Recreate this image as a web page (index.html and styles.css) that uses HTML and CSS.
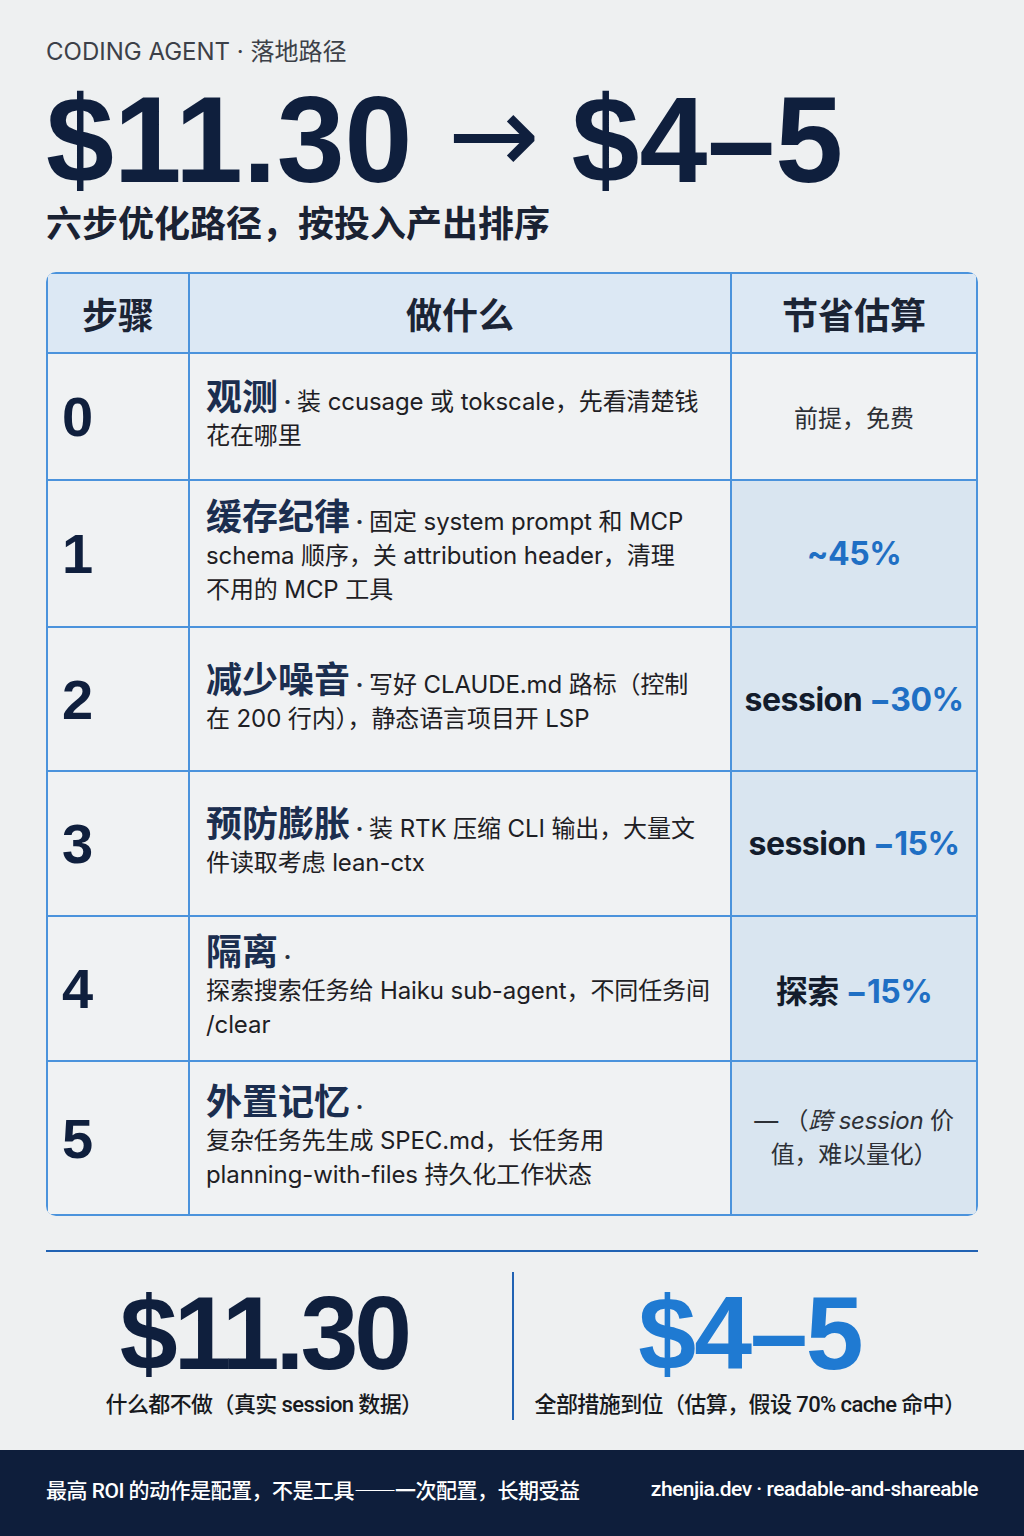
FILE: index.html
```html
<!DOCTYPE html>
<html lang="zh-CN">
<head>
<meta charset="utf-8">
<title>Coding Agent 落地路径</title>
<link rel="stylesheet" href="styles.css">
</head>
<body>
<div class="page">
  <header class="hero">
    <div class="eyebrow">CODING AGENT · 落地路径</div>
    <h1 class="headline"><span class="num a">$11.30</span><span class="arrow">→</span><span class="num b">$4–5</span></h1>
    <div class="subtitle">六步优化路径，按投入产出排序</div>
  </header>

  <div class="table">
    <div class="cell head">步骤</div>
    <div class="cell head">做什么</div>
    <div class="cell head">节省估算</div>

    <div class="cell step">0</div>
    <div class="cell what"><p><span class="t">观测</span><b class="dot"> · </b>装 ccusage 或 tokscale，先看清楚钱<br>花在哪里</p></div>
    <div class="cell save plain"><p>前提，免费</p></div>

    <div class="cell step">1</div>
    <div class="cell what"><p><span class="t">缓存纪律</span><b class="dot"> · </b>固定 system prompt 和 MCP<br>schema 顺序，关 attribution header，清理<br>不用的 MCP 工具</p></div>
    <div class="cell save tint"><p><span class="blue">~45%</span></p></div>

    <div class="cell step">2</div>
    <div class="cell what"><p><span class="t">减少噪音</span><b class="dot"> · </b>写好 CLAUDE.md 路标（控制<br>在 200 行内），静态语言项目开 LSP</p></div>
    <div class="cell save tint"><p>session <span class="blue">−30%</span></p></div>

    <div class="cell step">3</div>
    <div class="cell what"><p><span class="t">预防膨胀</span><b class="dot"> · </b>装 RTK 压缩 CLI 输出，大量文<br>件读取考虑 lean-ctx</p></div>
    <div class="cell save tint"><p>session <span class="blue">−15%</span></p></div>

    <div class="cell step">4</div>
    <div class="cell what"><p><span class="t">隔离</span><b class="dot"> ·</b><br>探索搜索任务给 Haiku sub-agent，不同任务间<br>/clear</p></div>
    <div class="cell save tint"><p>探索 <span class="blue">−15%</span></p></div>

    <div class="cell step">5</div>
    <div class="cell what"><p><span class="t">外置记忆</span><b class="dot"> ·</b><br>复杂任务先生成 SPEC.md，长任务用<br>planning-with-files 持久化工作状态</p></div>
    <div class="cell save tint note"><p>— （<em>跨 session</em> 价<br>值，难以量化）</p></div>
  </div>

  <section class="compare">
    <div class="side left">
      <div class="big dark">$11.30</div>
      <div class="cap">什么都不做（真实 session 数据）</div>
    </div>
    <div class="side right">
      <div class="big bright">$4–5</div>
      <div class="cap">全部措施到位（估算，假设 70% cache 命中）</div>
    </div>
  </section>
</div>
<footer class="footer">
  <span>最高 ROI 的动作是配置，不是工具<span class="dash">——</span>一次配置，长期受益</span>
  <span>zhenjia.dev · readable-and-shareable</span>
</footer>
</body>
</html>
```
FILE: styles.css
```css
* { box-sizing: border-box; }
html, body { margin: 0; padding: 0; }
body {
  background: #eef0f1;
  font-family: "Inter", "Noto Sans CJK SC", sans-serif;
  color: #1b1f27;
  width: 1024px;
  height: 1536px;
  display: flex;
  flex-direction: column;
}
.page {
  flex: 1;
  padding: 36px 46px 0 46px;
}
.eyebrow {
  font-size: 24px;
  line-height: 32px;
  color: #3c4048;
}
.headline {
  margin: 13px 0 0 0;
  display: flex;
  align-items: center;
  font-family: "Liberation Sans", "Noto Sans CJK SC", sans-serif;
  font-weight: 700;
  font-size: 122px;
  line-height: 118px;
  color: #0f1f3d;
}
.headline .a { letter-spacing: 0; }
.headline .b { letter-spacing: 0; }
.headline .arrow {
  font-family: "DejaVu Sans", sans-serif;
  font-weight: 400;
  font-size: 110px;
  margin: 0 32px 0 35px;
  position: relative;
  top: -5px;
}
.subtitle {
  margin-top: 2px;
  font-size: 36px;
  line-height: 46px;
  font-weight: 700;
  color: #1a2233;
}
.table {
  margin-top: 25px;
  display: grid;
  grid-template-columns: 140px 540px 244px;
  grid-template-rows: 78px 125px 145px 142px 143px 143px 152px;
  gap: 2px;
  padding: 2px;
  background: #4b93dc;
  border-radius: 10px;
  overflow: hidden;
  width: 932px;
}
.cell {
  background: #f0f2f3;
  display: flex;
  align-items: center;
}
.cell p { margin: 0; }
.head {
  background: #dce8f4;
  justify-content: center;
  font-size: 36px;
  font-weight: 700;
  color: #1b2435;
}
.step {
  padding-left: 14px;
  font-family: "Liberation Sans", sans-serif;
  font-weight: 700;
  font-size: 56px;
  color: #0f1f3d;
}
.what { padding: 0 6px 0 16px; }
.what p {
  font-size: 24px;
  line-height: 34px;
  color: #1e2024;
  letter-spacing: -0.1px;
  white-space: nowrap;
}
.what .t {
  font-size: 36px;
  font-weight: 700;
  color: #1b2e4f;
  letter-spacing: 0;
}
.what .dot {
  font-weight: 700;
  color: #2a3040;
}
.save {
  justify-content: center;
  text-align: center;
  font-size: 32px;
  font-weight: 700;
  color: #131c2c;
  letter-spacing: -0.5px;
}
.save.tint { background: #d9e5f0; }
.save.plain {
  font-size: 24px;
  font-weight: 400;
  color: #2d3036;
  letter-spacing: 0;
}
.save.note {
  font-size: 24px;
  font-weight: 400;
  color: #2d3036;
  line-height: 34px;
  letter-spacing: -0.2px;
  padding: 0 8px;
}
.save.note em { font-style: italic; }
.blue { color: #1f6fc4; }

.compare {
  margin-top: 34px;
  border-top: 2px solid #2162b3;
  display: grid;
  grid-template-columns: 1fr 1fr;
  padding: 20px 0 24px 0;
}
.side {
  display: flex;
  flex-direction: column;
  align-items: center;
}
.side.left { padding-right: 30px; }
.side.right { padding-left: 8px; }
.side + .side { border-left: 2px solid #2162b3; }
.big {
  font-family: "Liberation Sans", sans-serif;
  font-weight: 700;
  font-size: 104px;
  line-height: 106px;
  letter-spacing: -4px;
  margin-top: 8px;
}
.big.dark { color: #0f1f3d; }
.big.bright { color: #1f7ad2; letter-spacing: -2px; }
.cap {
  margin-top: 4px;
  font-family: "Roboto", "Noto Sans CJK SC", sans-serif;
  font-size: 22px;
  line-height: 30px;
  font-weight: 500;
  color: #17191d;
  letter-spacing: -0.6px;
}
.footer {
  height: 86px;
  background: #0e1e3b;
  color: #ffffff;
  display: flex;
  align-items: center;
  justify-content: space-between;
  padding: 0 46px 8px 46px;
  font-family: "Roboto", "Noto Sans CJK SC", sans-serif;
  font-size: 21px;
  font-weight: 500;
  letter-spacing: -0.5px;
}
.footer .dash { font-family: "Noto Sans CJK SC", sans-serif; letter-spacing: -1px; }
```
